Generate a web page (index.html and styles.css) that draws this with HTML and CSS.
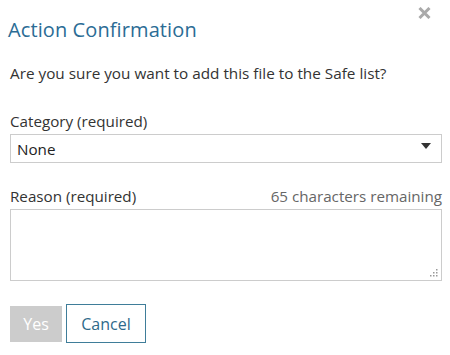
FILE: index.html
```html
<!DOCTYPE html>
<html>
<head>
<meta charset="utf-8">
<link rel="stylesheet" href="styles.css">
</head>
<body>
<div class="dialog">
  <div class="header">
    <h1 class="title">Action Confirmation</h1>
    <svg class="close" width="13" height="12" viewBox="0 0 13 12"><path d="M1.5 1L11.5 11M11.5 1L1.5 11" stroke="#aaa" stroke-width="3"/></svg>
  </div>
  <p class="question">Are you sure you want to add this file to the Safe list?</p>
  <div class="field">
    <label class="label">Category (required)</label>
    <div class="select">
      <span>None</span>
      <svg class="arrow" width="10" height="6" viewBox="0 0 10 6"><path d="M0 0H10L5 6Z" fill="#333"/></svg>
    </div>
  </div>
  <div class="field reason">
    <div class="label-row">
      <label class="label">Reason (required)</label>
      <span class="remaining">65 characters remaining</span>
    </div>
    <div class="textarea">
      <svg class="grip" width="8" height="8" viewBox="0 0 8 8"><g fill="#999"><rect x="6" y="0" width="1.5" height="1.5"/><rect x="6" y="3" width="1.5" height="1.5"/><rect x="3" y="3" width="1.5" height="1.5"/><rect x="6" y="6" width="1.5" height="1.5"/><rect x="3" y="6" width="1.5" height="1.5"/><rect x="0" y="6" width="1.5" height="1.5"/></g></svg>
    </div>
  </div>
  <div class="buttons">
    <button class="btn yes">Yes</button>
    <button class="btn cancel">Cancel</button>
  </div>
</div>
</body>
</html>
```
FILE: styles.css
```css
* { box-sizing: border-box; }
html, body { margin: 0; padding: 0; background: #fff; }
body { font-family: "Open Sans", "Lato", sans-serif; color: #333; }
.dialog { width: 450px; height: 355px; padding: 0 8px 0 10px; }
.header { display: flex; justify-content: space-between; align-items: flex-start; height: 62px; }
.title { margin: 17px 0 0 -2px; font-size: 20px; line-height: 26px; font-weight: 400; color: #2b6c95; letter-spacing: 0.1px; }
.close { margin: 7px 11px 0 0; }
.question { margin: 0; font-size: 15.3px; line-height: 22px; color: #333; }
.field { margin-top: 27px; }
.label { font-size: 15.2px; line-height: 20px; color: #333; display: block; }
.select { margin-top: 3px; height: 29px; border: 1px solid #ccc; display: flex; align-items: center; justify-content: space-between; padding: 0 10px 0 6px; font-size: 15.2px; color: #222; }
.arrow { margin-top: -5px; }
.reason { margin-top: 23px; }
.label-row { display: flex; justify-content: space-between; }
.remaining { font-size: 15.2px; line-height: 20px; color: #666; }
.textarea { margin-top: 3px; height: 72px; border: 1px solid #ccc; position: relative; }
.grip { position: absolute; right: 3px; bottom: 3px; }
.buttons { display: flex; align-items: center; gap: 4px; margin-top: 23px; }
.btn { font-family: inherit; font-size: 16px; background: #fff; cursor: pointer; padding: 0; }
.yes { width: 52px; height: 36px; background: #ccc; color: #fff; border: none; }
.cancel { width: 80px; height: 39px; border: 1.5px solid #3f7d99; color: #2f6a8a; }
```
